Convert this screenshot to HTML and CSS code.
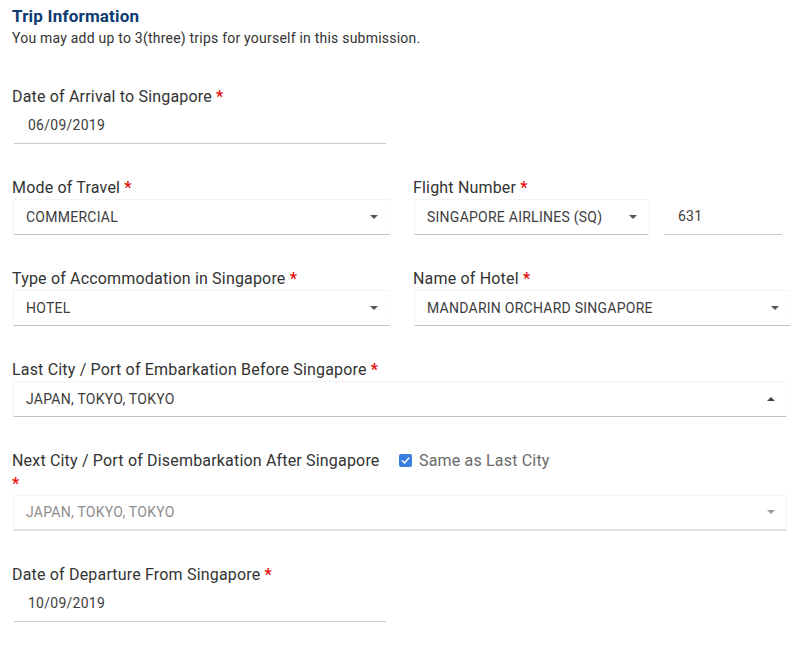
FILE: index.html
```html
<!DOCTYPE html>
<html>
<head>
<meta charset="utf-8">
<link rel="stylesheet" href="styles.css">
</head>
<body>
<div class="page">
  <div class="header">
    <h2 class="title">Trip Information</h2>
    <p class="subtitle">You may add up to 3(three) trips for yourself in this submission.</p>
  </div>

  <div class="grid">
    <div class="field">
      <div class="label">Date of Arrival to Singapore <span class="req">*</span></div>
      <div class="input date">06/09/2019</div>
    </div>
    <div class="field"></div>

    <div class="field">
      <div class="label">Mode of Travel <span class="req">*</span></div>
      <div class="select"><span>COMMERCIAL</span><i class="caret"></i></div>
    </div>
    <div class="field">
      <div class="label">Flight Number <span class="req">*</span></div>
      <div class="flight">
        <div class="select airline"><span>SINGAPORE AIRLINES (SQ)</span><i class="caret"></i></div>
        <div class="input number">631</div>
      </div>
    </div>

    <div class="field">
      <div class="label">Type of Accommodation in Singapore <span class="req">*</span></div>
      <div class="select"><span>HOTEL</span><i class="caret"></i></div>
    </div>
    <div class="field">
      <div class="label">Name of Hotel <span class="req">*</span></div>
      <div class="select"><span>MANDARIN ORCHARD SINGAPORE</span><i class="caret"></i></div>
    </div>

    <div class="field wide">
      <div class="label">Last City / Port of Embarkation Before Singapore <span class="req">*</span></div>
      <div class="select long"><span>JAPAN, TOKYO, TOKYO</span><i class="caret up"></i></div>
    </div>

    <div class="field wide">
      <div class="label-row">
        <div class="label narrow">Next City / Port of Disembarkation After Singapore <span class="req">*</span></div>
        <label class="check">
          <span class="box"><svg viewBox="0 0 14 14" width="14" height="14"><path d="M3.5 7.2 L6 9.6 L10.6 4.4" fill="none" stroke="#fff" stroke-width="1.6" stroke-linecap="round" stroke-linejoin="round"/></svg></span>
          <span class="check-text">Same as Last City</span>
        </label>
      </div>
      <div class="select long disabled"><span>JAPAN, TOKYO, TOKYO</span><i class="caret"></i></div>
    </div>

    <div class="field">
      <div class="label">Date of Departure From Singapore <span class="req">*</span></div>
      <div class="input date">10/09/2019</div>
    </div>
  </div>
</div>
</body>
</html>
```

FILE: styles.css
```css
* { box-sizing: border-box; }
html, body { margin: 0; padding: 0; background: #fff; }
body {
  font-family: Roboto, "Liberation Sans", Arial, sans-serif;
  color: #333;
}
.page {
  padding: 6px 0 0 12px;
  width: 800px;
}
.header { margin-bottom: 36.5px; }
.title {
  margin: 0;
  font-size: 17px;
  line-height: 20px;
  font-weight: 700;
  letter-spacing: 0.2px;
  color: #0c3a72;
}
.subtitle {
  margin: 2px 0 0;
  font-size: 14px;
  line-height: 20px;
  letter-spacing: 0.22px;
  color: #333;
}
.grid {
  display: grid;
  grid-template-columns: 378px 379px;
  column-gap: 23px;
  row-gap: 32px;
}
.field.wide { grid-column: 1 / span 2; }
.label {
  font-size: 16px;
  line-height: 23px;
  letter-spacing: 0.18px;
  color: #333;
}
.req { color: #e30d0d; font-weight: 700; }
.label-row { display: flex; align-items: flex-start; }
.label.narrow { width: 374px; flex: none; }
.check {
  display: flex;
  align-items: center;
  margin-left: 13px;
  height: 23px;
}
.box {
  width: 13px;
  height: 13px;
  border-radius: 2px;
  background: #3a7fde;
  display: flex;
  align-items: center;
  justify-content: center;
  margin-right: 7px;
}
.box svg { width: 13px; height: 13px; }
.check-text { font-size: 16px; letter-spacing: 0.18px; color: #6a6a6a; }

.input {
  height: 36px;
  line-height: 35px;
  font-size: 14px;
  letter-spacing: 0.25px;
  color: #3d3d3d;
  border-bottom: 1px solid #c9c9c9;
}
.input.date {
  margin-left: 2px;
  width: 372px;
  padding-left: 14px;
}
.select {
  position: relative;
  display: flex;
  align-items: center;
  justify-content: space-between;
  height: 36px;
  margin-left: 1px;
  padding: 0 11px 0 12px;
  font-size: 14px;
  letter-spacing: 0.25px;
  color: #3d3d3d;
  text-transform: uppercase;
  border: 1px solid #f4f4f4;
  border-right-color: #fafafa;
  border-bottom: 1px solid #c4c4c4;
}
.grid > .field > .select { width: 377px; }
.grid > .field > .select.long { width: 774px; }
.caret {
  width: 0;
  height: 0;
  border-left: 4px solid transparent;
  border-right: 4px solid transparent;
  border-top: 4px solid #555;
}
.caret.up {
  border-top: none;
  border-bottom: 4px solid #444;
}
.flight { display: flex; gap: 15px; }
.flight .select.airline { width: 235px; }
.input.number { width: 118px; padding-left: 14px; }
.select.disabled {
  color: #8d8d8d;
  border-color: #f6f6f6;
  border-bottom: 2px solid #e2e2e2;
}
.select.disabled .caret { border-top-color: #999; }
```
